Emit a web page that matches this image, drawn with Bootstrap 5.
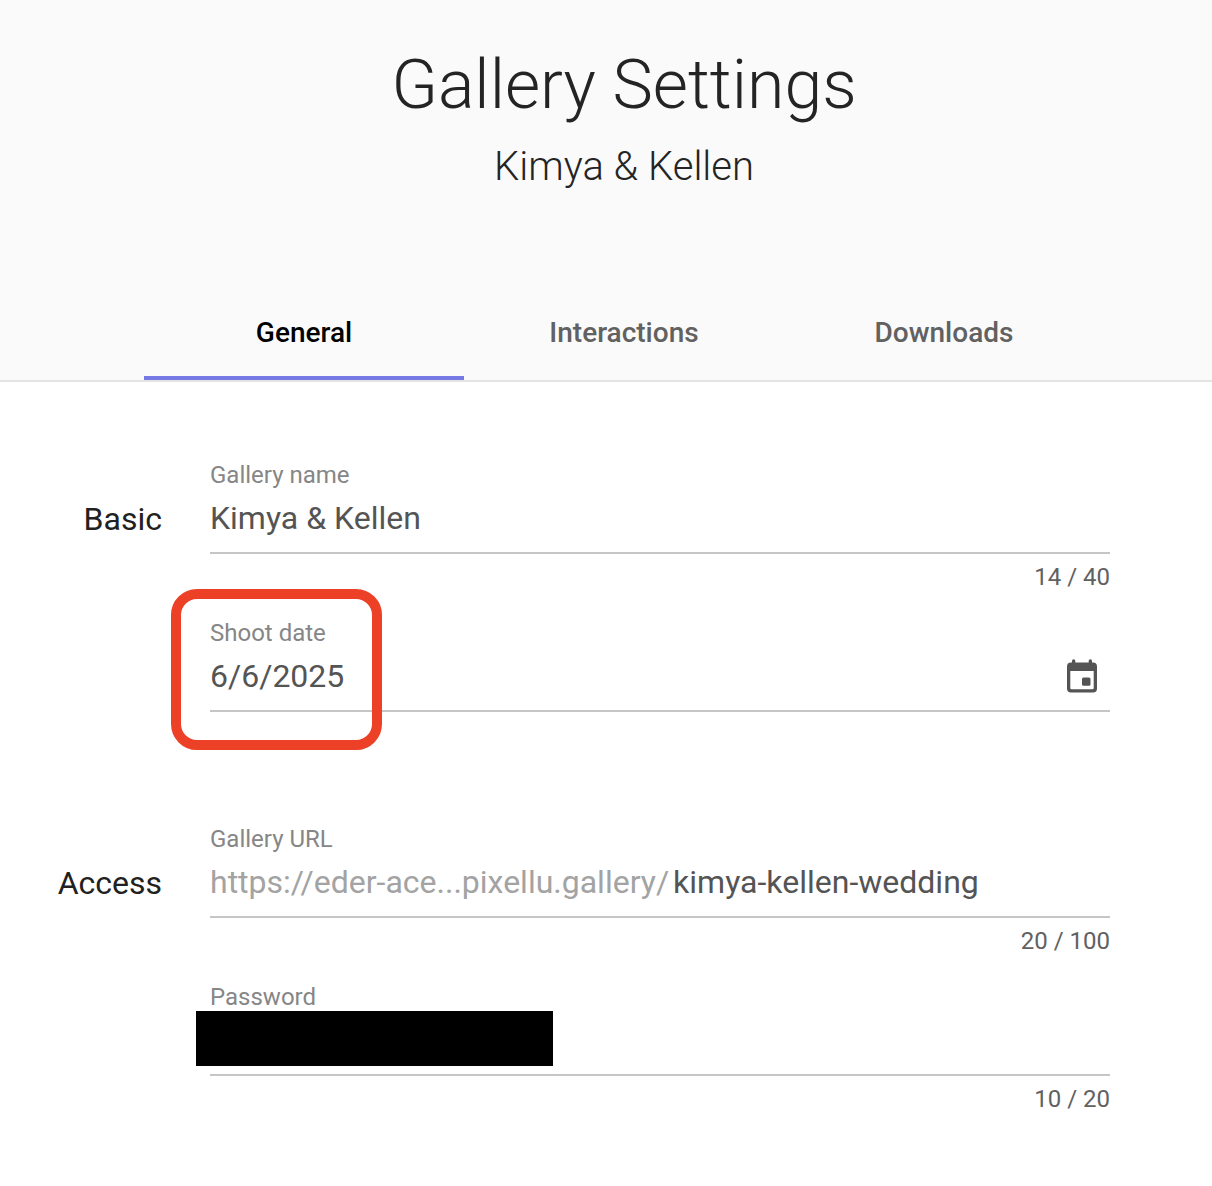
<!DOCTYPE html>
<html lang="en">
<head>
<meta charset="utf-8">
<meta name="viewport" content="width=device-width, initial-scale=1">
<title>Gallery Settings</title>
<link href="https://cdn.jsdelivr.net/npm/bootstrap@5.3.0/dist/css/bootstrap.min.css" rel="stylesheet">
<style>
body{font-family:Roboto,sans-serif;color:#212121;height:1186px;overflow:hidden;background:#fff}
.settings-head{height:382px;background:#fafafa;border-bottom:2px solid #e4e4e4;padding-left:36px}
.settings-head h1{font-size:68px;font-weight:300;line-height:80px;padding-top:45px;margin:0;color:#242424}
.settings-head h2{font-size:40px;font-weight:300;line-height:48px;margin:18px 0 0;color:#242424}
.settings-tabs{width:960px}
.settings-tabs .nav-link{width:320px;height:96px;padding:6px 0 0;line-height:86px;font-size:28px;font-weight:500;color:#616161;border-bottom:4px solid transparent;border-radius:0}
.settings-tabs .nav-link.active{color:#000;border-color:#7679e4}
.settings-form{padding:68px 102px 0 0}
.group-label{width:162px;margin-right:48px;font-size:32px;line-height:40px;padding-top:49px}
.field{height:158px;padding-top:10px}
.field label{font-size:24px;line-height:30px;color:#868686;display:block}
.field-line{height:64px;border-bottom:2px solid #c6c6c6;font-size:32px;line-height:40px;padding-top:8px;color:#545454;white-space:nowrap}
.counter{font-size:24px;line-height:30px;margin-top:8px;color:#616161}
.url-base{color:#a3a3a3;margin-right:4px}
.group-access{margin-top:48px}
.highlight-box{left:-39px;top:-19px;width:211px;height:161px;border:10px solid #ec4027;border-radius:26px}
.redaction{left:-14px;top:39px;width:357px;height:55px;background:#000}
.calendar{width:40px;height:40px;margin-right:8px}
</style>
<script src="https://cdn.jsdelivr.net/npm/bootstrap@5.3.0/dist/js/bootstrap.bundle.min.js"></script>
</head>
<body>
<header class="settings-head d-flex flex-column align-items-center">
<h1>Gallery Settings</h1>
<h2>Kimya &amp; Kellen</h2>
<nav class="nav settings-tabs mt-auto text-center">
<a class="nav-link active" href="#">General</a><a class="nav-link" href="#">Interactions</a><a class="nav-link" href="#">Downloads</a>
</nav>
</header>
<main class="settings-form">
<section class="d-flex">
<div class="group-label text-end flex-shrink-0">Basic</div>
<div class="flex-grow-1">
<div class="field"><label>Gallery name</label><div class="field-line">Kimya &amp; Kellen</div><div class="counter text-end">14 / 40</div></div>
<div class="field position-relative"><label>Shoot date</label><div class="field-line d-flex justify-content-between"><span>6/6/2025</span>
<svg class="calendar" viewBox="0 0 40 40" fill="#545454"><path fill-rule="evenodd" d="M9 6.500H31Q35 6.500 35 10.500V32.500Q35 36.500 31 36.500H9Q5 36.500 5 32.500V10.500Q5 6.500 9 6.500ZM8.300 15V32Q8.300 33.200 9.500 33.200H30.500Q31.700 33.200 31.700 32V15Z"/><rect x="10" y="3.200" width="3.300" height="7" rx="1.600"/><rect x="26.700" y="3.200" width="3.300" height="7" rx="1.600"/><rect x="20" y="21.500" width="8.500" height="8.300" rx="1.600"/></svg></div><div class="highlight-box position-absolute"></div></div>
</div>
</section>
<section class="d-flex group-access">
<div class="group-label text-end flex-shrink-0">Access</div>
<div class="flex-grow-1">
<div class="field"><label>Gallery URL</label><div class="field-line"><span class="url-base">https://eder-ace...pixellu.gallery/</span><span>kimya-kellen-wedding</span></div><div class="counter text-end">20 / 100</div></div>
<div class="field position-relative"><label>Password</label><div class="field-line"></div><div class="redaction position-absolute"></div><div class="counter text-end">10 / 20</div></div>
</div>
</section>
</main>
</body>
</html>
